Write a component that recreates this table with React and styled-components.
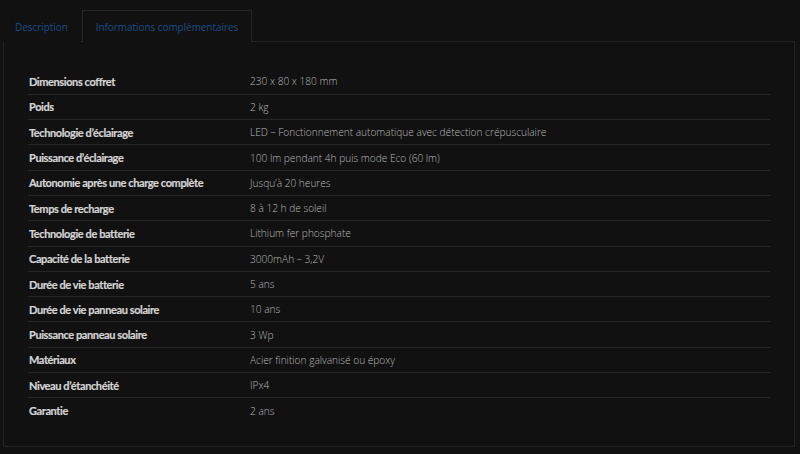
import React, { useState } from "react";
import styled, { createGlobalStyle } from "styled-components";

const specs = [
	["Dimensions coffret", "230 x 80 x 180 mm"],
	["Poids", "2 kg"],
	["Technologie d’éclairage", "LED – Fonctionnement automatique avec détection crépusculaire"],
	["Puissance d’éclairage", "100 lm pendant 4h puis mode Eco (60 lm)"],
	["Autonomie après une charge complète", "Jusqu’à 20 heures"],
	["Temps de recharge", "8 à 12 h de soleil"],
	["Technologie de batterie", "Lithium fer phosphate"],
	["Capacité de la batterie", "3000mAh – 3,2V"],
	["Durée de vie batterie", "5 ans"],
	["Durée de vie panneau solaire", "10 ans"],
	["Puissance panneau solaire", "3 Wp"],
	["Matériaux", "Acier finition galvanisé ou époxy"],
	["Niveau d’étanchéité", "IPx4"],
	["Garantie", "2 ans"],
];

const GlobalStyle = createGlobalStyle`
	html, body {
		margin: 0;
		padding: 0;
		background: #111111;
	}
	body {
		font-family: "Open Sans", "DejaVu Sans", sans-serif;
		width: 800px;
		height: 454px;
		overflow: hidden;
	}
`;

const Wrapper = styled.div`
	padding: 9px 5px 0 3px;
`;

const TabBar = styled.ul`
	display: flex;
	margin: 0;
	padding: 0;
	list-style: none;
`;

const Tab = styled.li`
	height: 31px;
	display: flex;
	align-items: center;
	padding: 0 ${(props) => (props.active ? "13px" : "11px")};
	margin-right: ${(props) => (props.active ? "0" : "2px")};
	font-size: 9.9px;
	color: #1d4e85;
	border: 1px solid ${(props) => (props.active ? "#262626" : "transparent")};
	border-bottom: none;
	background: #111111;
	position: relative;
	top: 1px;
	cursor: pointer;
`;

const Panel = styled.div`
	border: 1px solid #222222;
	height: 406px;
	box-sizing: border-box;
	padding: 27px 24px 0 24px;
`;

const Table = styled.table`
	width: 742px;
	border-collapse: collapse;
	td {
		height: 25.3px;
		padding: 0 1px;
		vertical-align: middle;
		border-bottom: 1px solid #262626;
		box-sizing: border-box;
		white-space: nowrap;
	}
	tr:last-child td {
		border-bottom: none;
	}
`;

const Label = styled.td`
	width: 221px;
	font-family: "Lato", "Roboto", sans-serif;
	font-weight: 700;
	font-size: 11px;
	letter-spacing: -0.4px;
	color: #d4d4d4;
	-webkit-text-stroke: 0.2px #d4d4d4;
`;

const Value = styled.td`
	font-family: "Open Sans", sans-serif;
	font-weight: 300;
	font-size: 10.15px;
	color: #b8b8b8;
`;

export default function App() {
	const [tab, setTab] = useState(1);
	return (
		<Wrapper>
			<GlobalStyle />
			<TabBar>
				<Tab active={tab === 0} onClick={() => setTab(0)}>
					Description
				</Tab>
				<Tab active={tab === 1} onClick={() => setTab(1)}>
					Informations complémentaires
				</Tab>
			</TabBar>
			<Panel>
				<Table>
					<tbody>
						{specs.map(([label, value]) => (
							<tr key={label}>
								<Label>{label}</Label>
								<Value>{value}</Value>
							</tr>
						))}
					</tbody>
				</Table>
			</Panel>
		</Wrapper>
	);
}
